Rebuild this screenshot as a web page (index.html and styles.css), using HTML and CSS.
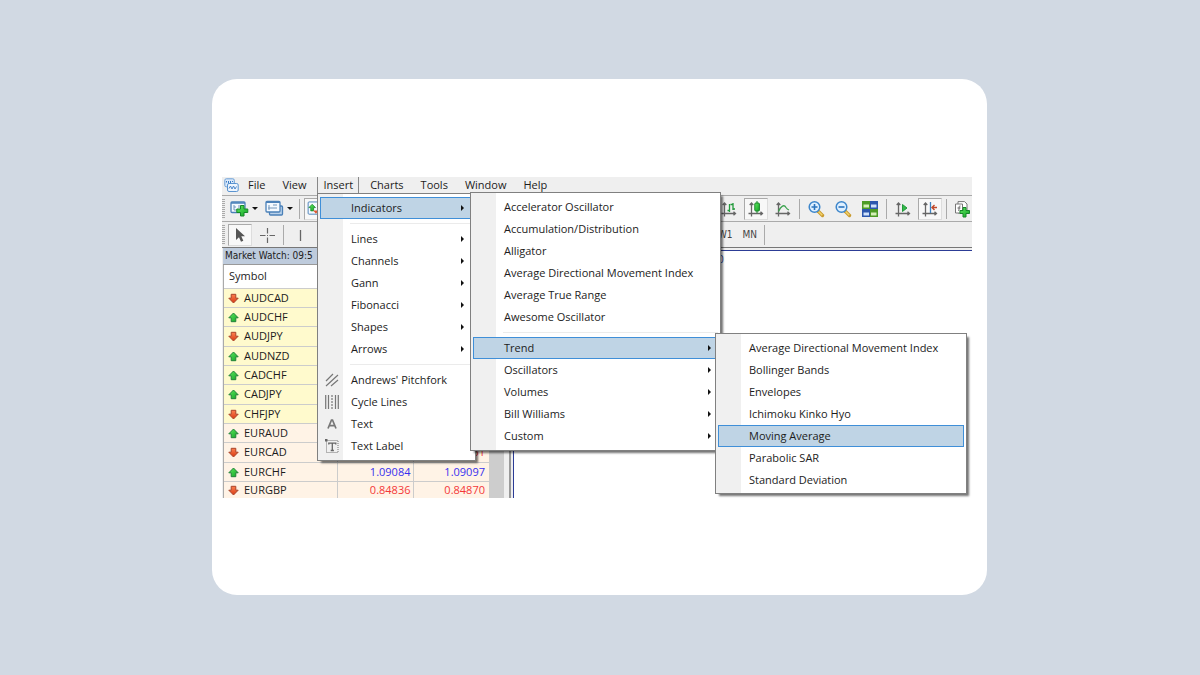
FILE: index.html
```html
<!DOCTYPE html>
<html lang="en">
<head>
<meta charset="utf-8">
<title>Trading terminal</title>
<link rel="stylesheet" href="styles.css">
</head>
<body>
<svg class="defs" aria-hidden="true">
  <defs>
    <linearGradient id="green" x1="0" y1="0" x2="1" y2="1"><stop offset="0" stop-color="#5fe85f"/><stop offset="1" stop-color="#12a526"/></linearGradient>
    <linearGradient id="red" x1="0" y1="0" x2="0" y2="1"><stop offset="0" stop-color="#ff8050"/><stop offset="1" stop-color="#d63a14"/></linearGradient>
    <symbol id="up" viewBox="0 0 11 11"><path d="M5.500 1L10.200 5.800H7.800V9.700H3.200V5.800H.8z" fill="url(#green)" stroke="#23803a"/></symbol>
    <symbol id="down" viewBox="0 0 11 11"><path d="M5.500 10L.8 5.200H3.200V1.300H7.800V5.200H10.200z" fill="url(#red)" stroke="#a9442a"/></symbol>
    <symbol id="axes" viewBox="0 0 16 16"><path d="M3.500 15.500V2.500M.5 12.500H14M1.700 4L3.500 2 5.300 4M12.500 10.700L14.500 12.500 12.500 14.300" fill="none" stroke="#666" stroke-width="1.300"/></symbol>
  </defs>
</svg>
<main class="card">
  <div class="app">
    <nav class="menubar">
      <svg class="logo" viewBox="0 0 15 14"><rect x=".8" y=".8" width="9.500" height="8" rx="1.500" fill="#dceafa" stroke="#6b9fd6"/><path d="M2.500 4.500V3M4.500 6V3M6.500 5V3M8.500 4V3" stroke="#3c7cc4"/><rect x="3.500" y="5.500" width="10.700" height="8" rx="1.500" fill="#eef5fd" stroke="#5b94d0"/><path d="M5 10.500L6.500 8 8 11 9.500 8 11 11 12.500 8.500" fill="none" stroke="#4a86ca"/></svg>
      <button>File</button><button>View</button><button class="open">Insert</button><button>Charts</button><button>Tools</button><button>Window</button><button>Help</button>
    </nav>

    <div class="toolbar">
      <span class="grip"></span>
      <button class="drop" aria-label="New chart"><svg width="19" height="17" viewBox="0 0 19 17"><rect x="1" y="2" width="14" height="10.500" rx="1" fill="#f3f9ff" stroke="#4a80b8" stroke-width="1.300"/><path d="M1 3h14" stroke="#4a80b8" stroke-width="1.500"/><path d="M4 5v5h7M4 7h2M9 5v3" fill="none" stroke="#7296bb"/><path d="M10.500 5.500h3.500v3.500h3.800v3.500H14v3.500h-3.500v-3.500H6.800V9h3.700z" fill="url(#green)" stroke="#168629"/></svg><i class="caret"></i></button>
      <button class="drop" aria-label="Profiles"><svg width="19" height="17" viewBox="0 0 19 17"><rect x="4.500" y="6" width="13" height="9" rx="1" fill="#b9d1ea" stroke="#4a80b8" stroke-width="1.300"/><rect x="1" y="1.500" width="14" height="10.500" rx="1" fill="#f3f9ff" stroke="#4a80b8" stroke-width="1.300"/><path d="M1 2.500h14" stroke="#4a80b8"/><path d="M4 5v5M3 8h9M8 5h4" fill="none" stroke="#7296bb"/></svg><i class="caret"></i></button>
      <span class="sep"></span>
      <button class="tool pressed watch-toggle" aria-label="Market Watch"><svg width="16" height="17" viewBox="0 0 16 17"><rect x=".7" y="1" width="13" height="13" rx="1" fill="#f3f9ff" stroke="#4a80b8"/><path d="M1.500 7L5 3.500l3.500 3.500H6.500v3.500h-3V7z" fill="url(#green)" stroke="#168629" stroke-width=".8"/><path d="M6 10h6l-3 3.500z" fill="#e05a30"/></svg></button>
      <div class="group">
        <button class="tool" aria-label="Bar chart"><svg><use href="#axes"/><path d="M8.500 3v8M6.500 9.500h2M12 2v7M9.500 3.500H12M12 8h2" fill="none" stroke="#219a3a" stroke-width="1.300"/></svg></button>
        <button class="tool pressed" aria-label="Candlesticks"><svg><use href="#axes"/><path d="M9 0v12" stroke="#168629"/><rect x="6.800" y="2" width="4.600" height="8" rx="1" fill="url(#green)" stroke="#168629"/></svg></button>
        <button class="tool" aria-label="Line chart"><svg><use href="#axes"/><path d="M3.500 10.500C6 5 9 3 11 6.500c.8 1.200 1.500 2 3 2.500" fill="none" stroke="#38a14b" stroke-width="1.300"/></svg></button>
        <span class="sep"></span>
        <button class="tool" aria-label="Zoom in"><svg><path d="M10 10l4.500 4.500" stroke="#c99a2e" stroke-width="3.400" stroke-linecap="round"/><path d="M10.500 10.500l3.800 3.800" stroke="#f3d36c" stroke-width="1.500"/><circle cx="6.500" cy="6" r="5.300" fill="#dff0ff" stroke="#3d86cb" stroke-width="1.500"/><path d="M6.500 3v6M3.500 6h6" stroke="#2b74bd" stroke-width="1.600"/></svg></button>
        <button class="tool" aria-label="Zoom out"><svg><path d="M10 10l4.500 4.500" stroke="#c99a2e" stroke-width="3.400" stroke-linecap="round"/><path d="M10.500 10.500l3.800 3.800" stroke="#f3d36c" stroke-width="1.500"/><circle cx="6.500" cy="6" r="5.300" fill="#dff0ff" stroke="#3d86cb" stroke-width="1.500"/><path d="M3.500 6h6" stroke="#2b74bd" stroke-width="1.600"/></svg></button>
        <button class="tool" aria-label="Tile windows"><svg><path d="M0 0h8v8H0zM8 8h8v8H8z" fill="#4d9b25"/><path d="M8 0h8v8H8zM0 8h8v8H0z" fill="#2c57ae"/><path d="M1.500 3.500h5.500v3H1.500zM9 11.500h5.500v3H9z" fill="#d5f0b8"/><path d="M9 3.500h5.500v3H9zM1.500 11.500h5.500v3H1.500z" fill="#cfe2fb"/></svg></button>
        <span class="sep"></span>
        <button class="tool" aria-label="Auto scroll"><svg><use href="#axes"/><path d="M7.500 3.500L12 7 7.500 10.500z" fill="#33b849" stroke="#219a3a"/></svg></button>
        <button class="tool pressed" aria-label="Chart shift"><svg><use href="#axes"/><path d="M8.500 1v11" stroke="#3f82c0" stroke-width="1.300"/><path d="M15 6.500h-5M12.500 4L10 6.500 12.500 9" fill="none" stroke="#c0492b" stroke-width="1.400"/></svg></button>
        <span class="sep"></span>
        <button class="tool last" aria-label="Indicator list"><svg><path d="M4 2.500V.6h6.500L13 3v9H4z" fill="#fff" stroke="#777"/><path d="M1.500 3h7v9h-7z" fill="#fff" stroke="#777"/><path d="M6.500 5C4.500 4.500 5.500 7 4.700 10M3.500 7h3" fill="none" stroke="#666"/><path d="M9 6.500h3V9.500h3.500v3H12V16H9v-3.500H6v-3h3z" fill="url(#green)" stroke="#168629"/></svg></button>
      </div>
    </div>

    <div class="toolbar">
      <span class="grip"></span>
      <button class="tool pressed" aria-label="Cursor"><svg><path d="M4 1v12l3-2.800 2 4.600 2.300-1-2-4.500H13z" fill="#555"/></svg></button>
      <button class="tool" aria-label="Crosshair"><svg><path d="M8.500 1v5.500M8.500 10.500V16M1 8.500h5.500M10.500 8.500H16M8 8.500h1" stroke="#666" stroke-width="1.200"/></svg></button>
      <span class="sep"></span>
      <button class="tool" aria-label="Vertical line"><svg><path d="M8.500 3v11" stroke="#666" stroke-width="1.300"/></svg></button>
      <div class="group periods"><button>W1</button><button>MN</button><span class="sep"></span></div>
    </div>

    <div class="workspace">
      <section class="watch">
        <h2>Market Watch: 09:5</h2>
        <div class="scroller">
        <table>
          <thead><tr><th>Symbol</th><th></th><th></th></tr></thead>
          <tbody>
            <tr><td><svg><use href="#down"/></svg>AUDCAD</td><td></td><td></td></tr>
            <tr><td><svg><use href="#up"/></svg>AUDCHF</td><td></td><td></td></tr>
            <tr><td><svg><use href="#down"/></svg>AUDJPY</td><td></td><td></td></tr>
            <tr><td><svg><use href="#up"/></svg>AUDNZD</td><td></td><td></td></tr>
            <tr><td><svg><use href="#up"/></svg>CADCHF</td><td></td><td></td></tr>
            <tr><td><svg><use href="#up"/></svg>CADJPY</td><td></td><td></td></tr>
            <tr><td><svg><use href="#down"/></svg>CHFJPY</td><td></td><td></td></tr>
            <tr class="euro"><td><svg><use href="#up"/></svg>EURAUD</td><td></td><td></td></tr>
            <tr class="euro falling"><td><svg><use href="#down"/></svg>EURCAD</td><td></td><td>51</td></tr>
            <tr class="euro rising"><td><svg><use href="#up"/></svg>EURCHF</td><td>1.09084</td><td>1.09097</td></tr>
            <tr class="euro falling"><td><svg><use href="#down"/></svg>EURGBP</td><td>0.84836</td><td>0.84870</td></tr>
          </tbody>
        </table>
        <div class="scrollbar"></div>
        </div>
      </section>
      <section class="chart"><span>0</span></section>
    </div>

    <ul class="menu menu-insert">
      <li><button class="more active">Indicators</button></li>
      <li class="rule"></li>
      <li><button class="more">Lines</button></li>
      <li><button class="more">Channels</button></li>
      <li><button class="more">Gann</button></li>
      <li><button class="more">Fibonacci</button></li>
      <li><button class="more">Shapes</button></li>
      <li><button class="more">Arrows</button></li>
      <li class="rule"></li>
      <li><button><svg viewBox="0 0 14 16"><path d="M1 9L8 2M1 14L13 3M6 14L13 8" stroke="#777" stroke-width="1.200"/></svg>Andrews' Pitchfork</button></li>
      <li><button><svg viewBox="0 0 14 16"><path d="M.7 1v14M3.500 1v14M10.500 1v14M13.300 1v14" stroke="#777" stroke-width="1.200"/><path d="M7 1v14" stroke="#777" stroke-width="1.200" stroke-dasharray="2 1"/></svg>Cycle Lines</button></li>
      <li><button><svg viewBox="0 0 14 16"><path d="M3 12.500L6.500 4h1L11 12.500M4.500 9.700h5" fill="none" stroke="#777" stroke-width="1.700"/></svg>Text</button></li>
      <li><button><svg viewBox="0 0 14 16"><path d="M1.500 2.500h11.500v12H1.500z" fill="none" stroke="#777" stroke-dasharray="1 1"/><path d="M0 1h2.500v2.500H0z" fill="#666"/><path d="M3.800 6.500V5.200h7v1.300M7.300 5v7.500M5.700 12.500h3.200" fill="none" stroke="#666" stroke-width="1.300"/></svg>Text Label</button></li>
    </ul>

    <ul class="menu menu-indicators">
      <li><button>Accelerator Oscillator</button></li>
      <li><button>Accumulation/Distribution</button></li>
      <li><button>Alligator</button></li>
      <li><button>Average Directional Movement Index</button></li>
      <li><button>Average True Range</button></li>
      <li><button>Awesome Oscillator</button></li>
      <li class="rule"></li>
      <li><button class="more active">Trend</button></li>
      <li><button class="more">Oscillators</button></li>
      <li><button class="more">Volumes</button></li>
      <li><button class="more">Bill Williams</button></li>
      <li><button class="more">Custom</button></li>
    </ul>

    <ul class="menu menu-trend">
      <li><button>Average Directional Movement Index</button></li>
      <li><button>Bollinger Bands</button></li>
      <li><button>Envelopes</button></li>
      <li><button>Ichimoku Kinko Hyo</button></li>
      <li><button class="active">Moving Average</button></li>
      <li><button>Parabolic SAR</button></li>
      <li><button>Standard Deviation</button></li>
    </ul>
  </div>
</main>
</body>
</html>
```
FILE: styles.css
```css
* { box-sizing: border-box; }

body {
  margin: 0;
  min-height: 100vh;
  padding: 0 1px 1px 0;
  display: flex;
  align-items: center;
  justify-content: center;
  background: #d1d9e3;
  color: #1c1c1c;
  font: 11px/16px "Open Sans", "Noto Sans", sans-serif;
}

button {
  border: 0;
  padding: 0;
  background: none;
  color: inherit;
  font: inherit;
}

svg { display: block; flex: none; }
.defs { position: absolute; width: 0; height: 0; }

.card {
  width: 100%;
  max-width: 775px;
  padding: 98px 15px 97px 10px;
  border-radius: 25px;
  background: #fff;
}

.app {
  position: relative;
  background: #efefef;
}

.menubar {
  display: flex;
  gap: 1px;
  height: 18px;
  padding-left: 2px;
}
.logo { width: 15px; height: 14px; margin-top: 1px; }
.menubar button { padding: 0 8px 2px; }
.menubar .open {
  border: 1px solid #888;
  border-width: 0 1px;
  padding: 0 5px 2px;
  margin: 0 2px;
}

.toolbar {
  display: flex;
  align-items: center;
  height: 26px;
  gap: 3px;
  border-top: 1px solid #aaa;
  overflow: hidden;
}
.toolbar + .toolbar { padding-top: 1px; }
.grip {
  width: 3px;
  height: 20px;
  background: repeating-linear-gradient(#aaa 0 1px, #efefef 1px 2px);
}
.sep { flex: none; width: 1px; height: 20px; margin: 0 1px; background: #aaa; }
.tool {
  flex: none;
  display: flex;
  align-items: center;
  justify-content: center;
  width: 24px;
  height: 22px;
}
.tool svg { width: 16px; height: 16px; overflow: visible; }
.tool.last { width: 21px; }
.pressed {
  border: 1px solid #bbb;
  border-color: #aaa #ddd #ddd #aaa;
  background: #f8f8f8;
}
.watch-toggle { justify-content: flex-start; padding-left: 2px; }
.drop { display: flex; align-items: center; gap: 3px; padding-left: 2px; margin-right: 2px; }
.caret { border: 3px solid transparent; border-top: 3px solid #111; border-bottom: 0; }
.group { display: flex; align-items: center; gap: 3px; margin-left: auto; }
.periods { gap: 6px; margin-right: 206px; color: #444; font-size: 10px; font-family: "DejaVu Sans Condensed", "DejaVu Sans", sans-serif; }
.periods button + button { margin-left: 4px; }

.workspace {
  display: flex;
  border-top: 1px solid #777;
}
.watch {
  width: 282px;
  padding-left: 1px;
}
.watch h2 {
  margin: 0;
  padding-left: 2px;
  width: 266px;
  border-bottom: 1px solid #999;
  background: #becbdc;
  color: #222;
  font: 10px/16px "DejaVu Sans Condensed", "DejaVu Sans", sans-serif;
}
.scroller { display: flex; border-left: 1px solid #aaa; }
table { flex: 1; border-collapse: collapse; table-layout: fixed; background: #fffacd; }
th, td { padding: 0; border: 0 solid #ccc; font-weight: 400; }
th { height: 23px; padding-left: 5px; background: #fff; text-align: left; }
th:first-child { width: 113px; }
th:nth-child(2) { width: 76px; }
td { height: 19px; border-top-width: 1px; border-right-width: 1px; line-height: 16px; text-align: right; }
tr:nth-child(3n) td { height: 20px; }
tr:last-child td { height: 17px; }
td:first-child { text-align: left; }
td:last-child { padding-right: 4px; border-right-width: 0; }
td:nth-child(2) { padding-right: 2px; }
td svg { display: inline-block; width: 11px; height: 11px; margin: 0 5px 0 4px; vertical-align: -2px; }
.euro { background: #fff3e6; }
.rising td + td { color: #3830ee; }
.falling td + td { color: #f43838; }
.scrollbar { width: 15px; background: #cdcdcd; }

.chart {
  flex: 1;
  margin: 2px 0 0 9px;
  border-top: 1px solid #2c3c96;
  border-left: 1px solid #2c3c96;
  box-shadow: -2px 0 #efefef, -4px 0 #999;
  background: #fff;
  color: #2f3d94;
  font-size: 10px;
}
.chart span { display: block; padding-left: 204px; }

.menu {
  position: absolute;
  margin: 0;
  padding: 3px 2px;
  border: 1px solid #808080;
  background: linear-gradient(90deg, #f0f0f0 25px, #fff 25px);
  box-shadow: 3px 3px 2px -1px rgba(0, 0, 0, .55);
  list-style: none;
}
.menu-insert { left: 95px; top: 16px; width: 159px; }
.menu-indicators { left: 248px; top: 15px; width: 251px; }
.menu-trend { left: 493px; top: 156px; width: 252px; padding-bottom: 2px; }
.menu button {
  display: flex;
  align-items: center;
  width: 100%;
  height: 22px;
  padding-left: 30px;
  border: 1px solid transparent;
  text-align: left;
  white-space: nowrap;
}
.menu .active { border-color: #3f8fd8; background: #bfd4e5; }
.menu svg { width: 14px; height: 16px; margin: 0 12px 0 -26px; }
.more::after {
  content: "";
  margin-left: auto;
  margin-right: 6px;
  border: 3px solid transparent;
  border-left: 3px solid #111;
  border-right: 0;
}
.menu-insert .more::after { margin-right: 8px; }
.rule { height: 9px; margin-left: 30px; padding-top: 4px; }
.rule::before { content: ""; display: block; border-top: 1px solid #ebebeb; }
```
